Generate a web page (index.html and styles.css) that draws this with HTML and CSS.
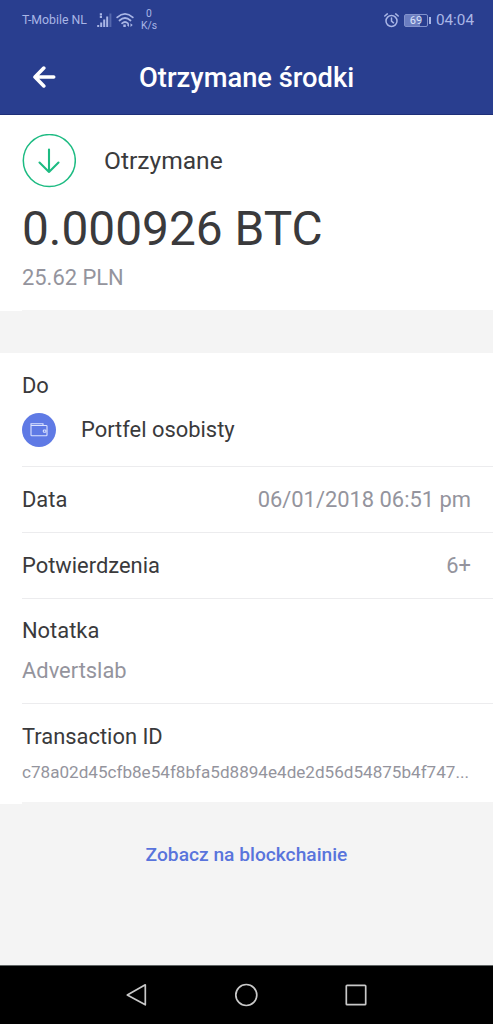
FILE: index.html
```html
<!DOCTYPE html>
<html lang="pl">
<head>
<meta charset="utf-8">
<title>Otrzymane środki</title>
<link rel="stylesheet" href="styles.css">
</head>
<body>
<header class="header">
  <div class="status">
    <span class="carrier">T-Mobile NL</span>
    <svg class="signal" width="15" height="15" viewBox="0 0 15 15" fill="currentColor"><path d="M.2 12h2v2h-2zM3.200 9.500h2V14h-2zM6.200 6.500h2V14h-2zM9.200 3.500h2V14h-2zM2.800 .2h2.200v2.200H2.800zM2.800 3h2.200v2H2.800z"/><path opacity=".35" d="M12.400.5h2V14h-2z"/></svg>
    <svg class="wifi" width="18" height="15" viewBox="0 0 18 15" fill="none" stroke="currentColor" stroke-width="1.700" stroke-linecap="round"><path d="M1.200 4.400Q9-2.500 16.800 4.400M3.500 7.500Q9 2.500 14.500 7.500M6 10.300Q9 7.700 12 10.300"/><path fill="currentColor" stroke="none" d="M7.300 11.500h2.500v2.500H7.300zM13 10.200v3.800l-2.200-1.900zM14.500 10.200v3.800l2.200-1.900z"/></svg>
    <span class="speed"><span>0</span><span>K/s</span></span>
    <span class="status-right">
      <svg class="alarm" width="15" height="15" viewBox="0 0 15 15" fill="none" stroke="currentColor" stroke-width="1.500" stroke-linecap="round"><circle cx="7.500" cy="8" r="5.500"/><path d="M7.500 5v3.200l2 1.600M.8 3 3.300.9M14.200 3 11.700.9"/></svg>
      <span class="battery"><span>69</span></span><i class="battery-tip"></i>
      <span class="clock">04:04</span>
    </span>
  </div>
  <div class="titlebar">
    <svg class="back" width="24" height="22" viewBox="0 0 24 22" fill="none" stroke="#fff" stroke-width="3.600" stroke-linecap="round" stroke-linejoin="round"><path d="M11.800 2.100 3 11l8.800 8.900M3.500 11h18.200"/></svg>
    <h1>Otrzymane środki</h1>
  </div>
</header>
<main>
  <section class="summary">
    <div class="type">
      <svg width="54" height="54" viewBox="0 0 54 54" fill="none" stroke="#1dbb82"><circle cx="27.300" cy="26.600" r="26" stroke-width="1.500"/><path d="M27 15.500v22.500M17.500 28.500 27 38l9.500-9.500" stroke-width="2.100" stroke-linecap="round" stroke-linejoin="round"/></svg>
      <span>Otrzymane</span>
    </div>
    <div class="amount">0.000926 BTC</div>
    <div class="fiat">25.62 PLN</div>
  </section>
  <div class="notch"></div>
  <section class="details">
    <div class="row wallet-row">
      <div>Do</div>
      <div class="wallet">
        <svg width="34" height="34" viewBox="0 0 34 34" fill="none"><circle cx="17" cy="17" r="17" fill="#5f7ae5"/><g stroke="#dce3ff" stroke-width="1.100"><path d="M9 11.500v10.400q0 .8.800.8h14.400q.8 0 .8-.8v-8.600q0-.8-.8-.8H9M9 12v-1.200h12v1.700"/><rect x="21.300" y="17" width="2.600" height="2.200" rx=".8"/></g></svg>
        <span>Portfel osobisty</span>
      </div>
    </div>
    <div class="row pair"><span>Data</span><span class="muted date">06/01/2018 06:51 pm</span></div>
    <div class="row pair"><span>Potwierdzenia</span><span class="muted">6+</span></div>
    <div class="row note"><div>Notatka</div><div class="muted note-text">Advertslab</div></div>
    <div class="row txid"><div>Transaction ID</div><div class="muted hash">c78a02d45cfb8e54f8bfa5d8894e4de2d56d54875b4f747...</div></div>
  </section>
  <div class="notch"></div>
  <a class="link">Zobacz na blockchainie</a>
</main>
<nav class="navbar">
  <svg width="22" height="24" viewBox="0 0 22 24"><path d="M20.300 1.800v20L2.300 12z"/></svg>
  <svg width="24" height="24" viewBox="0 0 24 24"><circle cx="12.300" cy="12" r="10.500"/></svg>
  <svg width="22" height="24" viewBox="0 0 22 24"><rect x="1.300" y="2.300" width="19.400" height="19.400" rx=".8"/></svg>
</nav>
</body>
</html>
```

FILE: styles.css
```css
* { box-sizing: border-box; }
body {
  margin: 0;
  height: 1024px;
  display: flex;
  flex-direction: column;
  overflow: hidden;
  background: #f4f4f4;
  color: #3a3a3c;
  font: 21.9px/30px Roboto, sans-serif;
  white-space: nowrap;
}
svg { display: block; flex: none; }
.header { height: 115px; background: #293e8f; border-bottom: 1px solid #1e2f78; color: #a9b6e6; }
.status { display: flex; align-items: center; height: 40px; padding: 0 19px 0 22px; }
.carrier { width: 66px; font-size: 12.3px; }
.signal { margin-left: 9px; }
.wifi { margin-left: 4px; }
.speed { display: flex; flex-direction: column; align-items: center; margin-left: 7px; font-size: 10.3px; line-height: 12px; }
.status-right { display: flex; align-items: center; margin-left: auto; }
.battery { width: 24px; height: 13px; margin-left: 5px; border: 1px solid #8292cc; border-radius: 2px; background: linear-gradient(90deg, #6b7dc0 68%, transparent 68%); color: #dce3fa; font-size: 11px; line-height: 11px; text-align: center; }
.battery-tip { width: 2px; height: 7px; margin-left: 1px; background: #a9b6e6; }
.clock { margin-left: 5px; font-size: 15.3px; }
.titlebar { display: flex; align-items: center; height: 74px; padding-left: 32px; }
h1 { margin: 0 0 0 83px; padding-top: 2px; color: #fff; font-size: 27.3px; font-weight: 500; line-height: 36px; }
main { flex: 1; display: flex; flex-direction: column; }
.summary { height: 195px; padding: 19px 22px 0; background: #fff; }
.type { display: flex; align-items: center; gap: 28px; font-size: 24.6px; }
.amount { margin-top: 11px; font-size: 47.8px; line-height: 60px; }
.fiat { margin-top: 4px; color: #94949d; }
.muted { color: #94949d; }
.notch { width: 22px; height: 1px; background: #fff; }
.details { margin-top: 42px; background: #fff; }
.row { margin-left: 22px; padding-right: 22px; border-bottom: 1px solid #ececee; }
.wallet-row { height: 114px; padding-top: 18px; }
.wallet { display: flex; align-items: center; gap: 25px; margin-top: 12px; }
.pair { display: flex; align-items: center; justify-content: space-between; height: 66px; }
.note { height: 105px; padding-top: 17px; }
.note-text { margin-top: 10px; }
.txid { height: 99px; padding-top: 18px; border-bottom-color: #f4f4f4; }
.hash { margin-top: 5px; font-size: 17.1px; }
.link { margin: 36px auto 0; color: #5974dc; font-size: 19.2px; font-weight: 500; }
.navbar { display: flex; align-items: center; justify-content: center; gap: 87px; height: 59px; padding-right: 1px; border-top: 1px solid #606565; background: #000; }
.navbar svg { fill: none; stroke: #c8c8c8; stroke-width: 1.700; stroke-linejoin: round; }
```
